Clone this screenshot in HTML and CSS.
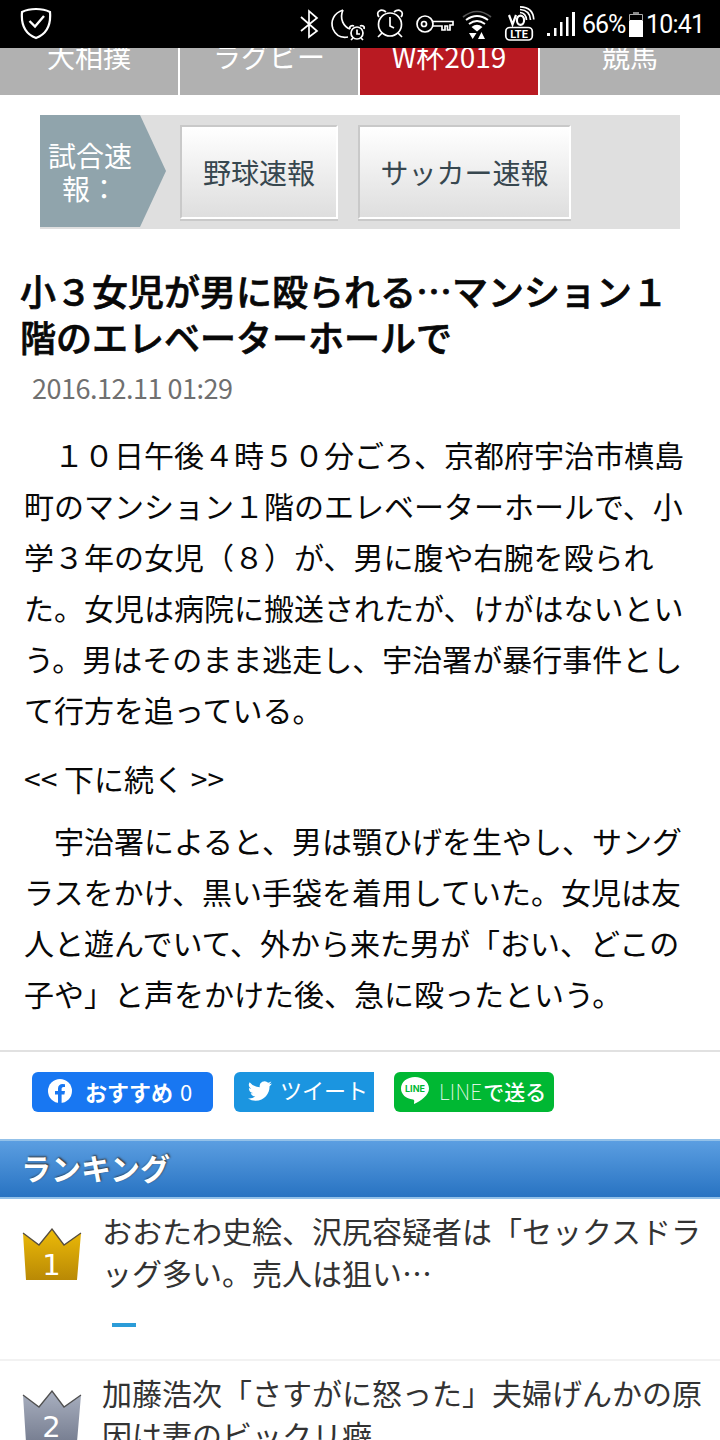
FILE: index.html
```html
<!DOCTYPE html>
<html lang="ja">
<head>
<meta charset="utf-8">
<title>ニュース</title>
<link rel="stylesheet" href="styles.css">
</head>
<body>
<header class="status">
  <svg class="shield" width="32" height="34" viewBox="0 0 32 34" fill="none" stroke="#fff"><path stroke-width="2.2" d="M16 2C11 2 6 3 2 5C1 17 5 27 16 31C27 27 31 17 30 5C26 3 21 2 16 2Z"/><path stroke-width="2.400" d="M9.500 14L15 19.500L24 9"/></svg>
  <svg class="icons" width="280" height="48" viewBox="296 0 280 48" fill="none" stroke="#fff" stroke-width="1.700">
    <path d="M301 17L317 31L309 37V11L317 18L301 31"/>
    <path d="M343 10C334 13 330 21 333 29C336 36 342 38 348 37M343 10C339 19 344 27 350 29"/>
    <circle cx="357" cy="33" r="6"/><path d="M357 29.500V34H360M350 29C349 26 352 25 354 26M364 29C365 26 362 25 360 26M353 38L351 40M361 38L363 40"/>
    <circle cx="390" cy="24.500" r="11.500"/><path d="M390 17V26L394 28M379 17C375 12 381 8 386 12M401 17C405 12 399 8 394 12M382 33L378 37M398 33L402 37"/>
    <circle cx="425" cy="24" r="8"/><circle cx="424" cy="24" r="2.500"/><path d="M432 21.500H453V25H450V30H447.500V26H445V30H442V26H432"/>
    <path stroke="#555" d="M463 17Q477 6 491 17"/>
    <path stroke-width="2" d="M466 20Q477 12 488 20M469 24Q477 18 485 24"/>
    <path fill="#fff" stroke="none" d="M471.500 27Q477 22.500 482.500 27L477 31.500ZM469 33H476.500L472.700 39ZM478 39H485L481.500 32Z"/>
    <path d="M509 15L512.500 24.500L516 15" stroke-width="2.200"/><ellipse cx="520.500" cy="20.200" rx="3.600" ry="4.600" stroke-width="2.200"/>
    <path stroke-width="1.700" d="M520 12.500Q526 13 526.500 20M520 9.500Q530 10 530.500 20M520 6.800Q533 7 533.800 19.500"/>
    <rect x="505.800" y="27.500" width="26.500" height="12.500" rx="4"/>
    <text class="lte" x="519" y="37.800" text-anchor="middle">LTE</text>
    <path fill="#fff" stroke="none" d="M547 33H550V36H547ZM554 28H556.500V36H554ZM560 22H562.500V36H560ZM566 17H568.500V36H566ZM572 12H575V36H572Z"/>
  </svg>
  <span class="percent">66%</span>
  <svg class="battery" width="14" height="26" viewBox="0 0 14 26"><path fill="#888" d="M4 1H10V3H4Z"/><path fill="#fff" d="M0 9H14V26H0Z"/><path fill="none" stroke="#aaa" d="M.5 10V3.500H13.500V10"/></svg>
  <span class="clock">10:41</span>
</header>
<nav class="tabs"><a>大相撲</a><a>ラグビー</a><a class="active">W杯2019</a><a>競馬</a></nav>
<section class="scores">
  <div class="score-label">試合速<br>報：</div>
  <a class="score-btn baseball">野球速報</a>
  <a class="score-btn soccer">サッカー速報</a>
</section>
<article>
  <h1>小３女児が男に殴られる…マンション１<br>階のエレベーターホールで</h1>
  <time>2016.12.11 01:29</time>
  <p>　１０日午後４時５０分ごろ、京都府宇治市槙島<br>町のマンション１階のエレベーターホールで、小<br>学３年の女児（８）が、男に腹や右腕を殴られ<br>た。女児は病院に搬送されたが、けがはないとい<br>う。男はそのまま逃走し、宇治署が暴行事件とし<br>て行方を追っている。</p>
  <div class="more">&lt;&lt; 下に続く &gt;&gt;</div>
  <p>　宇治署によると、男は顎ひげを生やし、サング<br>ラスをかけ、黒い手袋を着用していた。女児は友<br>人と遊んでいて、外から来た男が「おい、どこの<br>子や」と声をかけた後、急に殴ったという。</p>
</article>
<section class="share">
  <a class="fb"><svg width="24" height="24" viewBox="0 0 24 24"><circle cx="12" cy="12" r="12" fill="#fff"/><path fill="#1877f2" d="M10 24V15.500H7V12H10V9.500C10 6.500 12 5 14.500 5L17 5.200V8H15.500C14 8 13.600 9 13.600 10V12H17L16.400 15.500H13.600V24Z"/></svg><b>おすすめ</b><span>0</span></a>
  <a class="tw"><svg width="24" height="22" viewBox="0 2 24 20"><path fill="#fff" d="M23.950 4.570a10 10 0 0 1-2.820.770 4.960 4.960 0 0 0 2.160-2.720 9.900 9.900 0 0 1-3.120 1.190 4.920 4.920 0 0 0-8.380 4.480A13.930 13.930 0 0 1 1.640 3.160a4.920 4.920 0 0 0 1.520 6.570 4.900 4.900 0 0 1-2.230-.610v.060a4.920 4.920 0 0 0 3.950 4.830 5 5 0 0 1-2.210.080 4.940 4.940 0 0 0 4.600 3.420A9.870 9.870 0 0 1 0 19.540a13.990 13.990 0 0 0 7.550 2.210c9.050 0 14-7.500 14-13.980l-.020-.630a9.900 9.900 0 0 0 2.420-2.570Z"/></svg><span>ツイート</span></a>
  <a class="line"><svg width="30" height="28" viewBox="0 0 30 28"><path fill="#fff" d="M15 0C7 0 1 5 1 11.500C1 17.500 6 21.500 13 22.500C15 23 14 25 14 27C21 24 29 18 29 11.500C29 5 23 0 15 0Z"/><text x="15" y="15" text-anchor="middle">LINE</text></svg><span class="latin">LINE</span><span class="send">で送る</span></a>
</section>
<h2>ランキング</h2>
<ol>
  <li>
    <svg class="crown" width="60" height="54" viewBox="0 0 60 54"><defs><linearGradient id="gold" x2="0" y2="1"><stop stop-color="#edbb08"/><stop offset="1" stop-color="#b98905"/></linearGradient></defs><path fill="url(#gold)" d="M1 5L17 17L30 1L42 17L59 5L55 52H4Z"/><path fill="none" stroke="#554d40" stroke-width="1.300" d="M1 5L17 17L30 1L42 17L59 5"/><text x="29.500" y="46.500" text-anchor="middle">1</text></svg>
    <div><a>おおたわ史絵、沢尻容疑者は「セックスドラ<br>ッグ多い。売人は狙い…</a><i></i></div>
  </li>
  <li>
    <svg class="crown" width="60" height="54" viewBox="0 0 60 54"><defs><linearGradient id="silver" x2="0" y2="1"><stop stop-color="#a9b0c0"/><stop offset="1" stop-color="#777e91"/></linearGradient></defs><path fill="url(#silver)" d="M1 5L17 17L30 1L42 17L59 5L55 52H4Z"/><path fill="none" stroke="#505050" stroke-width="1.300" d="M1 5L17 17L30 1L42 17L59 5"/><text x="29.500" y="46.500" text-anchor="middle">2</text></svg>
    <div><a>加藤浩次「さすがに怒った」夫婦げんかの原<br>因は妻のビックリ癖</a></div>
  </li>
</ol>
</body>
</html>
```
FILE: styles.css
```css
* { box-sizing: border-box; margin: 0; padding: 0; }
html, body { height: 1440px; overflow: hidden; }
body { width: 720px; background: #fff; color: #080808; font-family: "Noto Sans CJK JP", sans-serif; white-space: nowrap; }
.status { height: 48px; background: #000; color: #fff; display: flex; font: 25px/50px Roboto, sans-serif; }
.shield { margin: 7px 0 0 20px; }
.icons { margin-left: 244px; }
.lte { font: bold 11px Roboto, sans-serif; fill: #fff; stroke: none; }
.percent { width: 46px; margin-left: 6px; letter-spacing: -1px; }
.battery { margin: 11px 0 0 1px; }
.clock { margin-left: 3px; letter-spacing: -.8px; }
.tabs { height: 47px; display: flex; overflow: hidden; }
.tabs a { width: 180px; height: 47px; background: #b1b1b1; border-right: 2px solid #fff; color: #fff; font-size: 28px; line-height: 16px; text-align: center; }
.tabs .active { background: #b91a22; }
.tabs a:last-child { border: 0; }
.scores { margin: 20px 40px 0; height: 114px; background: #dfdfdf; display: flex; }
.score-label { width: 126px; height: 112px; padding: 24px 26px 0 0; background: #90a4ac; color: #fff; clip-path: polygon(0 0, 100px 0, 126px 56px, 100px 112px, 0 112px); font-size: 28px; line-height: 33px; text-align: center; }
.score-btn { height: 94px; margin: 10px 0 0 14px; border: 2px solid #fff; border-top-color: #c9c9c9; border-left-color: #c9c9c9; box-shadow: 0 2px 0 #c9c9c9; background: linear-gradient(#fff, #dedede); color: #37474f; font-size: 28px; line-height: 91px; text-align: center; }
.baseball { width: 158px; }
.soccer { width: 213px; margin-left: 20px; }
article { height: 823px; padding: 38px 0 0 24px; border-bottom: 2px solid #e1e1e1; font-size: 30px; line-height: 50.900px; }
h1 { margin-left: -4px; font-size: 36px; line-height: 46px; font-weight: 500; -webkit-text-stroke: .7px #080808; }
time { display: block; height: 70px; padding: 9px 0 0 8px; font-size: 27px; letter-spacing: -.5px; line-height: 40px; color: #707070; }
.more { height: 81px; padding-top: 19px; line-height: 50px; }
.share { height: 87px; display: flex; gap: 21px; padding: 20px 32px 0; color: #fff; }
.share a { height: 40px; display: flex; align-items: center; border-radius: 6px; }
.fb { width: 181px; padding: 0 0 3px 16px; background: #1877f2; font-size: 22px; }
.fb b { margin-left: 13px; }
.fb span { margin-left: 7px; }
.tw { width: 140px; padding: 0 0 6px 14px; background: #1b95e0; font-size: 22px; }
.tw svg { margin-top: 4px; }
.share .tw { border-radius: 6px 0 0 6px; }
.tw span { margin-left: 8px; }
.line { width: 160px; padding: 0 0 2px 6px; background: #00b833; font-size: 21px; margin-left: -1px; }
.line text { font: bold 9px Inter, sans-serif; fill: #00b833; }
.latin { margin-left: 9px; margin-right: 1px; font-weight: 100; letter-spacing: .2px; }
.send { font-weight: 500; }
h2 { height: 60px; padding-left: 21px; border: solid #93c1e9; border-width: 2px 0; background: linear-gradient(#5b9ee1, #2873c2); color: #fff; font-size: 30px; line-height: 52px; text-shadow: 1px -1px 2px #333; }
ol { list-style: none; }
li { height: 162px; display: flex; padding: 10px 0 0 22px; border-bottom: 2px solid #f2f2f2; color: #333; font-size: 30px; line-height: 42px; }
.crown { margin-top: 19px; }
.crown text { font: 29px "DejaVu Sans", sans-serif; fill: #fff; }
li div { margin-left: 20px; }
li i { display: block; width: 24px; height: 4px; margin: 30px 0 0 10px; background: #2b9cd8; }
```
